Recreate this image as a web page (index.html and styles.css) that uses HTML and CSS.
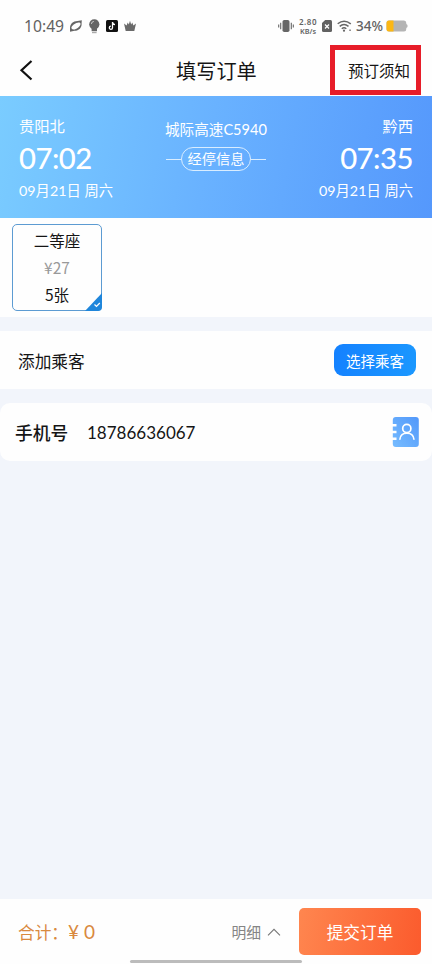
FILE: index.html
```html
<!DOCTYPE html>
<html lang="zh-CN">
<head>
<meta charset="utf-8">
<meta name="viewport" content="width=device-width">
<title>填写订单</title>
<link rel="stylesheet" href="styles.css">
</head>
<body>
<div class="app">
  <div class="status">
    <div class="status-left">
      <span class="clock">10:49</span>
      <svg class="i-ring" width="14" height="14" viewBox="0 0 14 14"><path fill="#666" fill-rule="evenodd" d="M1 9.500C.8 5 4 2 8.500 2L12.800 1.200 12.600 4.500C13 8.500 10 11.800 5.500 11.800L1 12.700ZM2.600 9.500C3.500 11 6.500 10.700 9 8.700 11.500 6.700 12 4.700 11.200 3.900 10 2.900 7 3.700 4.700 5.500 2.700 7.200 2 8.600 2.600 9.500Z"/></svg>
      <svg class="i-bulb" width="11" height="15" viewBox="0 0 11 15"><circle cx="5.300" cy="5.300" r="5.100" fill="#666"/><path d="M2.600 8.500h5.400v3.700h-5.400z" fill="#666"/><path d="M3 12.900h4.600v1.300h-4.600z" fill="#aaa"/><path d="M2.500 4.800C2.600 3.400 3.500 2.600 4.700 2.500" fill="none" stroke="#ddd" stroke-width="1"/></svg>
      <svg class="i-note" width="12" height="12" viewBox="0 0 12 12"><rect width="12" height="12" rx="1.500" fill="#111"/><path d="M6.500 2v5.700A1.600 1.600 0 1 1 4.900 6.100M6.500 2.200C6.700 3.700 7.600 4.500 9 4.600" fill="none" stroke="#fff" stroke-width="1.300"/></svg>
      <svg class="i-crown" width="12" height="12" viewBox="0 0 12 12"><path d="M0 3.500 2.600 5.500 3.700 2.500 4.800 4.500 6 .8 7.200 4.500 8.300 2.500 9.400 5.500 12 3.500 10.300 11H1.700Z" fill="#6a6a6a"/></svg>
    </div>
    <div class="status-right">
      <svg width="16" height="14" viewBox="0 0 16 14"><rect x="4.500" y="1" width="7" height="12" rx="1.800" fill="#666"/><path d="M2.700 3.700v6.600M.7 5.500v3M13.300 3.700v6.600M15.300 5.500v3" stroke="#666" stroke-width="1.100"/></svg>
      <div class="net"><span>2.80</span><span>KB/s</span></div>
      <svg class="i-sim" width="10" height="12" viewBox="0 0 10 12"><path d="M3.200 0H8.500Q10 0 10 1.500V10.500Q10 12 8.500 12H1.500Q0 12 0 10.500V3Z" fill="#626262"/><path d="m3 4.500 4 4m0-4-4 4" stroke="#fff" stroke-width="1.200"/></svg>
      <svg class="i-wifi" width="15" height="12" viewBox="0 0 15 12"><path d="M.7 3.800Q7 -1.500 13.800 3.800M2.700 6.300Q7 2.700 11.500 6.300M4.800 8.700Q7 6.700 9.300 8.700" fill="none" stroke="#666" stroke-width="1.500"/><circle cx="7" cy="10.700" r="1.100" fill="#666"/><path d="M12.300 9.500h1.500v1.500h-1.500z" fill="#777"/></svg>
      <span class="percent">34%</span>
      <svg class="i-bat" width="22" height="12" viewBox="0 0 22 12"><path d="M3 .5H18Q20.300.5 20.300 3V4L21.500 5V7L20.300 8V9Q20.300 11.500 18 11.500H3Q.5 11.500.5 9V3Q.5.5 3 .5Z" fill="#b4b4b4"/><path d="M3 .5H7.500V11.500H3Q.5 11.500.5 9V3Q.5.5 3 .5Z" fill="#fbb715"/></svg>
    </div>
  </div>

  <header class="nav">
    <svg width="14" height="21" viewBox="0 0 14 21"><path d="M12.500 1 2.500 10.300 12.500 19.500" fill="none" stroke="#111" stroke-width="2.200"/></svg>
    <h1>填写订单</h1>
    <a class="notice">预订须知</a>
  </header>

  <section class="trip">
    <div class="stop">
      <span class="station">贵阳北</span>
      <span class="time">07:02</span>
      <span class="date">09月21日 周六</span>
    </div>
    <div class="train">
      <span class="number">城际高速C5940</span>
      <div class="via"><span class="pill">经停信息</span></div>
    </div>
    <div class="stop arrive">
      <span class="station">黔西</span>
      <span class="time">07:35</span>
      <span class="date">09月21日 周六</span>
    </div>
  </section>

  <section class="seats">
    <div class="seat">
      <span>二等座</span>
      <span class="price">¥27</span>
      <span>5张</span>
      <svg class="tick" width="17" height="18" viewBox="0 0 17 18"><path d="M17 0V14Q17 18 13 18H0Z" fill="#1f86db"/><path d="m9.500 11.500 2 2 3.300-3.500" fill="none" stroke="#fff" stroke-width="1.200"/></svg>
    </div>
  </section>

  <section class="passengers">
    <span class="add">添加乘客</span>
    <button class="choose">选择乘客</button>
  </section>

  <section class="phone">
    <span class="label">手机号</span>
    <span class="value">18786636067</span>
    <svg class="contacts" width="27" height="30" viewBox="0 0 27 30">
      <defs><linearGradient id="book" x1="0" y1="1" x2="1" y2="0"><stop offset="0" stop-color="#76bcff"/><stop offset="1" stop-color="#5298fa"/></linearGradient></defs>
      <rect x=".8" width="26" height="30" rx="3" fill="url(#book)"/>
      <path d="M0 8.300h4.500M0 15h4.500M0 21.700h4.500" stroke="#fff" stroke-width="2.400"/>
      <circle cx="14.800" cy="11.500" r="4.100" fill="none" stroke="#fff" stroke-width="1.700"/>
      <path d="M7.800 22.800C8.100 13.800 21.700 13.800 22 22.800" fill="none" stroke="#fff" stroke-width="1.700"/>
    </svg>
  </section>

  <footer class="bar">
    <span class="total">合计：<b>¥ 0</b></span>
    <span class="detail">明细<svg width="14" height="8" viewBox="0 0 14 8"><path d="m1 7.300 6-6 6 6" fill="none" stroke="#777" stroke-width="1.100"/></svg></span>
    <button class="submit">提交订单</button>
    <i class="home"></i>
  </footer>
</div>
</body>
</html>
```
FILE: styles.css
```css
* { box-sizing: border-box; }
body { margin: 0; font-family: Lato, "Noto Sans CJK SC", sans-serif; color: #151515; }
button { border: 0; padding: 0; font-family: inherit; color: #fff; }
svg { display: block; flex: none; }
.app { width: 432px; height: 964px; display: flex; flex-direction: column; background: #f2f5fb; white-space: nowrap; overflow: hidden; }

.status { height: 44px; flex: none; padding: 8px 24px 0; display: flex; justify-content: space-between; background: #fefefe; color: #626262; font-family: "Noto Sans", sans-serif; }
.status-left, .status-right { display: flex; align-items: center; height: 36px; }
.clock { width: 40px; font-size: 15.7px; }
.i-ring { margin-left: 5px; }
.i-bulb { margin-left: 6px; }
.i-note { margin-left: 6px; }
.i-crown { margin-left: 6px; }
.net { display: flex; flex-direction: column; align-items: center; width: 20px; margin-left: 4px; font-size: 7.3px; line-height: 10px; font-weight: 600; }
.net span { height: 8px; line-height: 8px; }
.net span:first-child { height: 9px; font-size: 8px; letter-spacing: .5px; }
.i-sim { margin-left: 4px; }
.i-wifi { margin-left: 5px; }
.percent { margin-left: 4px; width: 28px; font-size: 13.5px; font-weight: 500; }
.i-bat { margin-left: 2px; }

.nav { height: 52px; flex: none; display: grid; grid-template-columns: 157px 1fr 91px; align-items: center; padding: 0 11px 0 19px; background: #fefefe; }
.nav h1 { margin: 0; padding-top: 1px; font-size: 20.2px; line-height: 30px; font-weight: 400; }
.notice { height: 50px; border: 5px solid #e71d29; display: flex; align-items: center; justify-content: center; padding-left: 7px; font-size: 15.5px; }

.trip { height: 122px; flex: none; padding: 18px 19px 0; display: flex; justify-content: space-between; background: linear-gradient(100deg, #7accff 0%, #69b2ff 48%, #5598fc 100%); color: #fff; }
.stop { display: flex; flex-direction: column; width: 110px; }
.arrive { align-items: flex-end; }
.station { font-size: 15.3px; line-height: 24px; }
.time { margin-top: 1px; font-size: 29.3px; line-height: 38px; font-weight: 500; letter-spacing: -.5px; }
.date { margin-top: 2px; font-size: 14.3px; line-height: 24px; }
.train { display: flex; flex-direction: column; align-items: center; padding-top: 4px; }
.number { font-size: 14.6px; line-height: 24px; }
.via { display: flex; align-items: center; margin-top: 5px; }
.via::before, .via::after { content: ""; width: 15px; height: 1px; background: #d9edff; }
.pill { width: 70px; height: 24px; border: 1px solid #d9edff; border-radius: 12px; text-align: center; font-size: 14.2px; line-height: 22px; }

.seats { height: 99px; flex: none; padding: 6px 12px; background: #fefefe; }
.seat { position: relative; width: 90px; height: 87px; padding-top: 2px; border: 1px solid #5c9bd2; border-radius: 5px; display: flex; flex-direction: column; align-items: center; font-size: 15.5px; line-height: 27px; font-family: "Noto Sans CJK SC", sans-serif; }
.price { color: #999; }
.tick { position: absolute; right: -1px; bottom: -1px; }

.passengers { height: 58px; flex: none; margin-top: 14px; padding: 0 16px 0 18px; display: flex; align-items: center; justify-content: space-between; background: #fefefe; font-size: 16.7px; }
.add { padding-top: 1px; }
.choose { width: 82px; height: 32px; border-radius: 9px; background: linear-gradient(100deg, #1481ff, #1b98ff); font-size: 14.5px; }

.phone { height: 58px; flex: none; margin-top: 14px; padding: 0 13px 0 15px; display: flex; align-items: center; border-radius: 10px; background: #fefefe; }
.label { width: 72px; font-size: 17.7px; font-weight: 500; }
.value { padding-top: 1px; font-size: 17px; }
.contacts { margin-left: auto; }

.bar { position: relative; height: 65px; flex: none; margin-top: auto; padding: 0 11px 0 18px; display: flex; align-items: center; background: #fefefe; }
.total { padding-top: 1px; font-size: 16.7px; color: #d9893f; }
.total b { font-size: 19px; font-weight: 400; }
.detail { margin-left: auto; display: flex; align-items: center; gap: 6px; font-size: 14.8px; color: #858585; }
.submit { width: 122px; height: 47px; margin-left: 18px; border-radius: 5px; background: linear-gradient(100deg, #ff864f, #fb5b2d); font-size: 16.7px; }
.home { position: absolute; left: 130px; bottom: 1px; width: 172px; height: 3px; border-radius: 2px; background: #bcbcbc; }
```
